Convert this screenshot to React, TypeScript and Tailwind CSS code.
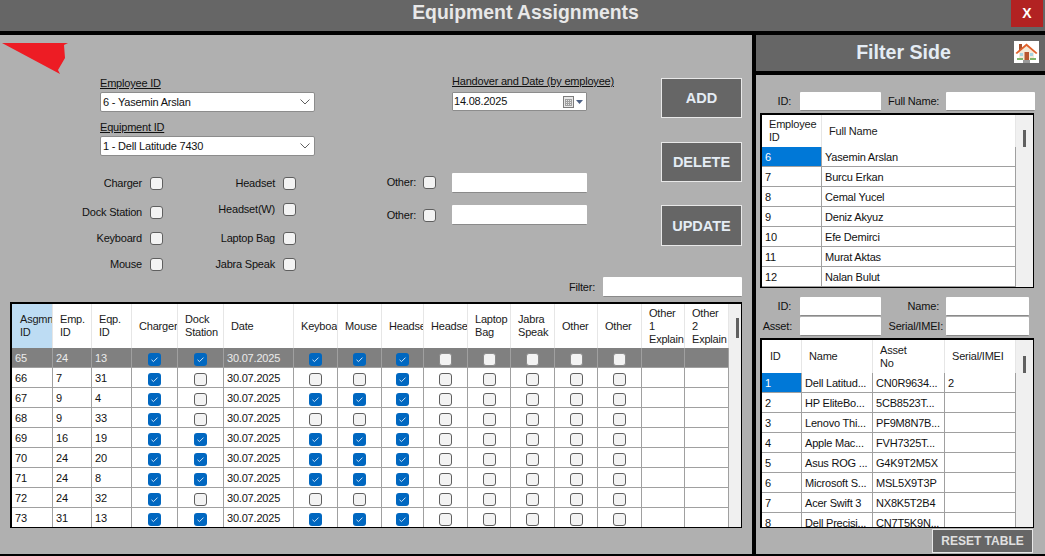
import React from "react";

const font = "font-['Liberation_Sans',Arial,sans-serif]";

interface BoxProps {
    checked?: boolean
    onDark?: boolean
}

const Box = ({checked, onDark}: BoxProps) => {
    if (checked) {
        return <span className="inline-flex items-center justify-center w-[13px] h-[13px] rounded-[3px] bg-[#0067c0] align-middle">
            <svg width="9" height="9" viewBox="0 0 9 9" fill="none">
                <path d="M1.5 4.8 L3.5 6.6 L7.5 2.6" stroke="#cfe4f7" strokeWidth="1"/>
            </svg>
        </span>;
    }
    return <span className={"inline-block w-[13px] h-[13px] rounded-[3px] border bg-[#f3f3f3] align-middle " + (onDark ? "border-[#8a8a8a]" : "border-[#5f5f5f]")}></span>;
}

const Field = ({className = ""}: { className?: string }) => (
    <div className={"bg-white rounded-[1px] border-b border-[#8a8a8a] " + className}></div>
);

const CheckLabel = ({label, gap, className}: { label: string, gap: string, className: string }) => (
    <div className={"flex justify-end items-center h-[14px] " + gap + " " + className}>
        <span className="whitespace-nowrap">{label}</span>
        <Box/>
    </div>
);

const Combo = ({value}: { value: string }) => (
    <div className="flex items-center justify-between w-[215px] h-[20px] bg-white border border-[#8c8c8c] rounded-[2px] pl-[2px] pr-[3px]">
        <span>{value}</span>
        <svg width="12" height="8" viewBox="0 0 12 8" fill="none">
            <path d="M1.5 1.5 L6 6 L10.5 1.5" stroke="#606060" strokeWidth="1"/>
        </svg>
    </div>
);

const ActionButton = ({label, className}: { label: string, className: string }) => (
    <div className={"flex items-center justify-center w-[81px] pt-[2px] bg-[#666666] border border-[#e8e8e8] text-[#e4ecf4] font-bold text-[14.5px] tracking-normal " + className}>{label}</div>
);

const Scrollbar = ({thumb}: { thumb: string }) => (
    <div className="w-[17px] shrink-0 bg-[#f0f0f0] flex justify-center">
        <div className={"w-[3px] bg-[#606060] " + thumb}></div>
    </div>
);

const widths = [41, 39, 40, 46, 46, 70, 44, 44, 42, 44, 43, 44, 43, 44, 43, 44];
const heads: React.ReactNode[] = ["Asgmnt ID", "Emp. ID", "Eqp. ID", "Charger", "Dock Station", "Date", "Keyboard", "Mouse", "Headset", "Headset(W)", "Laptop Bag", "Jabra Speak", "Other", "Other",
    <Fragment key="o1">Other<br/>1<br/>Explain</Fragment>,
    <Fragment key="o2">Other<br/>2<br/>Explain</Fragment>];

// id, emp, eqp, charger, dock, keyboard, mouse, headset
const rows: [number, number, number, number, number, number, number, number][] = [
    [65, 24, 13, 1, 1, 1, 1, 1],
    [66, 7, 31, 1, 0, 0, 0, 1],
    [67, 9, 4, 1, 0, 1, 1, 1],
    [68, 9, 33, 1, 0, 0, 0, 1],
    [69, 16, 19, 1, 1, 1, 1, 1],
    [70, 24, 20, 1, 1, 1, 1, 1],
    [71, 24, 8, 1, 1, 1, 1, 1],
    [72, 24, 32, 1, 0, 0, 0, 1],
    [73, 31, 13, 1, 1, 1, 1, 1],
];

const cell = "border-r border-b border-[#a0a0a0] h-[20px] p-0 pt-[2px] overflow-hidden whitespace-nowrap";
const headCell = "border-r border-[#e6e6e6] border-b-0 p-0 pl-[7px] overflow-hidden text-left font-normal align-middle leading-[13px] text-[#1a1a1a]";

const AssignmentTable = () => (
    <div className="flex mx-[10px] h-[226px] border-l-2 border-t-2 border-r border-b border-black bg-white overflow-hidden">
        <table className="table-fixed border-separate border-spacing-0 w-[717px] h-fit shrink-0">
            <colgroup>
                {widths.map((w, i) => <col key={i} style={{width: w}}/>)}
            </colgroup>
            <thead>
            <tr className="h-[44px]">
                {heads.map((h, i) => <th key={i} className={headCell + (i === 0 ? " bg-[#bddcf3] pl-[8px]" : "")}>{h}</th>)}
            </tr>
            </thead>
            <tbody>
            {rows.map((r, i) => {
                const sel = i === 0;
                const tone = sel ? " bg-[#808080] text-[#ececec]" : "";
                const text = cell + " pl-[3px]" + tone;
                const mid = cell + " text-center" + tone;
                return <tr key={r[0]}>
                    <td className={text}>{r[0]}</td>
                    <td className={text}>{r[1]}</td>
                    <td className={text}>{r[2]}</td>
                    <td className={mid}><Box checked={!!r[3]}/></td>
                    <td className={mid}><Box checked={!!r[4]}/></td>
                    <td className={text}>30.07.2025</td>
                    <td className={mid}><Box checked={!!r[5]}/></td>
                    <td className={mid}><Box checked={!!r[6]}/></td>
                    <td className={mid}><Box checked={!!r[7]}/></td>
                    <td className={mid}><Box onDark={sel}/></td>
                    <td className={mid}><Box onDark={sel}/></td>
                    <td className={mid}><Box onDark={sel}/></td>
                    <td className={mid}><Box onDark={sel}/></td>
                    <td className={mid}><Box onDark={sel}/></td>
                    <td className={text}></td>
                    <td className={text}></td>
                </tr>;
            })}
            </tbody>
        </table>
        <Scrollbar thumb="h-[20px] mt-[14px]"/>
    </div>
);

const employees: [string, string][] = [["6", "Yasemin Arslan"], ["7", "Burcu Erkan"], ["8", "Cemal Yucel"], ["9", "Deniz Akyuz"], ["10", "Efe Demirci"], ["11", "Murat Aktas"], ["12", "Nalan Bulut"]];

const EmployeeTable = () => (
    <div className="flex ml-[4px] w-[274px] h-[175px] border-l-2 border-t-2 border-r border-b border-black bg-white overflow-hidden">
        <table className="table-fixed border-separate border-spacing-0 w-[254px] h-fit shrink-0">
            <colgroup>
                <col style={{width: 60}}/>
                <col style={{width: 194}}/>
            </colgroup>
            <thead>
            <tr className="h-[32px]">
                <th className={headCell}>Employee ID</th>
                <th className={headCell}>Full Name</th>
            </tr>
            </thead>
            <tbody>
            {employees.map((e, i) => <tr key={e[0]}>
                <td className={cell + " pl-[3px]" + (i === 0 ? " bg-[#0078d7] text-white" : "")}>{e[0]}</td>
                <td className={cell + " pl-[3px]"}>{e[1]}</td>
            </tr>)}
            </tbody>
        </table>
        <Scrollbar thumb="h-[17px] mt-[15px]"/>
    </div>
);

const assets: [string, string, string, string][] = [
    ["1", "Dell Latitud...", "CN0R9634...", "2"],
    ["2", "HP EliteBo...", "5CB8523T...", ""],
    ["3", "Lenovo Thi...", "PF9M8N7B...", ""],
    ["4", "Apple Mac...", "FVH7325T...", ""],
    ["5", "Asus ROG ...", "G4K9T2M5X", ""],
    ["6", "Microsoft S...", "MSL5X9T3P", ""],
    ["7", "Acer Swift 3", "NX8K5T2B4", ""],
    ["8", "Dell Precisi...", "CN7T5K9N...", ""],
];

const AssetTable = () => (
    <div className="flex ml-[4px] w-[274px] h-[190px] border-l-2 border-t-2 border-r border-b border-black bg-white overflow-hidden">
        <table className="table-fixed border-separate border-spacing-0 w-[254px] h-fit shrink-0">
            <colgroup>
                <col style={{width: 40}}/>
                <col style={{width: 71}}/>
                <col style={{width: 72}}/>
                <col style={{width: 71}}/>
            </colgroup>
            <thead>
            <tr className="h-[33px]">
                <th className={headCell + " pl-[8px]"}>ID</th>
                <th className={headCell + " pl-[6px]"}>Name</th>
                <th className={headCell}>Asset<br/>No</th>
                <th className={headCell}>Serial/IMEI</th>
            </tr>
            </thead>
            <tbody>
            {assets.map((a, i) => <tr key={a[0]}>
                <td className={cell + " pl-[3px]" + (i === 0 ? " bg-[#0078d7] text-white" : "")}>{a[0]}</td>
                <td className={cell + " pl-[3px]"}>{a[1]}</td>
                <td className={cell + " pl-[3px]"}>{a[2]}</td>
                <td className={cell + " pl-[3px]"}>{a[3]}</td>
            </tr>)}
            </tbody>
        </table>
        <Scrollbar thumb="h-[17px] mt-[16px]"/>
    </div>
);

const HomeIcon = () => (
    <svg width="25" height="22" viewBox="0 0 25 22" className="bg-white">
        <rect x="5" y="3" width="3" height="6" fill="#a8502c"/>
        <path d="M5 11 L12.5 4 L20 11 V19 H5 Z" fill="#f4ead8"/>
        <path d="M1.5 12 L12.5 2.5 L23.5 12 L22 13 L12.5 5 L3 13 Z" fill="#e0602a"/>
        <rect x="10.5" y="11" width="4.5" height="8" fill="#b8562e"/>
        <rect x="6" y="12" width="3" height="3" fill="#a8d4e0"/>
        <rect x="16" y="12" width="3" height="3" fill="#a8d4e0"/>
        <rect x="3" y="17" width="6" height="2" fill="#7fb56a"/>
        <rect x="16" y="17" width="6" height="2" fill="#7fb56a"/>
        <rect x="9" y="19" width="7" height="3" fill="#9a9a9a"/>
    </svg>
);

const App = () => {
    return <div className={"w-[1045px] h-[556px] flex flex-col bg-black overflow-hidden text-[11px] tracking-[-0.2px] text-[#111111] " + font}>
        <div className="relative flex items-center justify-center h-[31px] bg-[#666666] shrink-0">
            <span className="text-[19.4px] tracking-normal font-bold text-[#e8e8e8] -mt-[6px] ml-[6px]">Equipment Assignments</span>
            <div className="absolute right-[2px] top-0 w-[32px] h-[27px] bg-[#b22222] flex items-center justify-center text-white font-bold text-[14px] tracking-normal">X</div>
        </div>
        <div className="flex mt-[4px] h-[519px]">
            <div className="relative w-[752px] shrink-0 bg-[#b0b0b0] flex flex-col">
                <svg width="70" height="34" viewBox="0 0 70 34" className="absolute left-0 top-[7px]">
                    <path d="M2 1 L68 1 L64 3 L65 16 L58 28 L60 32 Z" fill="#ed1c24"/>
                </svg>
                <div className="flex h-[267px]">
                    <div className="w-[330px] pl-[100px] shrink-0">
                        <div className="mt-[41px] h-[14px] leading-[14px] underline">Employee ID</div>
                        <div className="mt-[2px]"><Combo value="6 - Yasemin Arslan"/></div>
                        <div className="mt-[8px] h-[14px] leading-[14px] underline">Equipment ID</div>
                        <div className="mt-[2px]"><Combo value="1 - Dell Latitude 7430"/></div>
                        <div className="flex -ml-[100px] mt-[20px]">
                            <div className="w-[163px]">
                                <CheckLabel label="Charger" gap="gap-[8px]" className=""/>
                                <CheckLabel label="Dock Station" gap="gap-[8px]" className="mt-[15px]"/>
                                <CheckLabel label="Keyboard" gap="gap-[8px]" className="mt-[12px]"/>
                                <CheckLabel label="Mouse" gap="gap-[8px]" className="mt-[12px]"/>
                            </div>
                            <div className="w-[133px]">
                                <CheckLabel label="Headset" gap="gap-[8px]" className=""/>
                                <CheckLabel label="Headset(W)" gap="gap-[8px]" className="mt-[12px]"/>
                                <CheckLabel label="Laptop Bag" gap="gap-[8px]" className="mt-[15px]"/>
                                <CheckLabel label="Jabra Speak" gap="gap-[8px]" className="mt-[12px]"/>
                            </div>
                        </div>
                    </div>
                    <div className="w-[257px] shrink-0 flex flex-col">
                        <div className="ml-[122px] mt-[39px] h-[14px] leading-[14px] underline whitespace-nowrap">Handover and Date (by employee)</div>
                        <div className="ml-[122px] mt-[4px] w-[135px] h-[19px] flex items-center justify-between bg-white border border-[#8c8c8c] rounded-[1px] pl-[1px] pr-[3px]">
                            <span>14.08.2025</span>
                            <span className="flex items-center gap-[2px]">
                                <svg width="11" height="12" viewBox="0 0 11 12">
                                    <rect x="0.5" y="0.5" width="10" height="11" fill="#e8e8e8" stroke="#7c7c7c"/>
                                    <path d="M2.5 3 V10 M4.5 3 V10 M6.5 3 V10 M8.5 3 V10 M2 3.5 H9 M2 5.5 H9 M2 7.5 H9 M2 9.5 H9" stroke="#a0a0a0" strokeWidth="1"/>
                                </svg>
                                <svg width="7" height="4" viewBox="0 0 7 4"><path d="M0 0 H7 L3.5 4 Z" fill="#4d6185"/></svg>
                            </span>
                        </div>
                        <div className="flex items-center mt-[62px] h-[20px]">
                            <div className="w-[106px] flex justify-end items-center gap-[7px] -mt-[2px]">
                                <span>Other:</span><Box/>
                            </div>
                            <Field className="ml-[16px] w-[135px] h-[20px]"/>
                        </div>
                        <div className="flex items-center mt-[12px] h-[20px]">
                            <div className="w-[106px] flex justify-end items-center gap-[7px]">
                                <span>Other:</span><Box/>
                            </div>
                            <Field className="ml-[16px] w-[135px] h-[20px]"/>
                        </div>
                    </div>
                    <div className="flex flex-col items-end w-[165px] pr-[10px] shrink-0">
                        <ActionButton label="ADD" className="mt-[43px] h-[40px]"/>
                        <ActionButton label="DELETE" className="mt-[24px] h-[40px]"/>
                        <ActionButton label="UPDATE" className="mt-[23px] h-[41px]"/>
                        <div className="flex items-center gap-[8px] mt-[31px]">
                            <span className="whitespace-nowrap">Filter:</span>
                            <Field className="w-[139px] h-[20px]"/>
                        </div>
                    </div>
                </div>
                <AssignmentTable/>
            </div>
            <div className="ml-[4px] flex-1 flex flex-col">
                <div className="flex items-center h-[36px] bg-[#666666] relative shrink-0">
                    <span className="flex-1 text-center text-[19.6px] tracking-normal font-bold text-[#e4ecf4] pl-[6px]">Filter Side</span>
                    <div className="absolute right-[6px] top-[6px]"><HomeIcon/></div>
                </div>
                <div className="mt-[4px] flex-1 bg-[#b0b0b0] flex flex-col">
                    <div className="flex items-center h-[20px] mt-[16px]">
                        <span className="w-[35px] text-right">ID:</span>
                        <Field className="ml-[9px] w-[81px] h-[19px]"/>
                        <span className="ml-[7px] w-[50px] whitespace-nowrap">Full Name:</span>
                        <Field className="ml-[8px] w-[89px] h-[19px]"/>
                    </div>
                    <div className="mt-[2px]"><EmployeeTable/></div>
                    <div className="flex items-center h-[20px] mt-[8px]">
                        <span className="w-[35px] text-right">ID:</span>
                        <Field className="ml-[9px] w-[81px] h-[19px]"/>
                        <span className="ml-[6px] w-[52px] text-right">Name:</span>
                        <Field className="ml-[7px] w-[83px] h-[19px]"/>
                    </div>
                    <div className="flex items-center h-[20px]">
                        <span className="w-[36px] text-right">Asset:</span>
                        <Field className="ml-[8px] w-[81px] h-[19px]"/>
                        <span className="ml-[6px] w-[56px] text-right whitespace-nowrap">Serial/IMEI:</span>
                        <Field className="ml-[3px] w-[83px] h-[19px]"/>
                    </div>
                    <div className="mt-[2px]"><AssetTable/></div>
                    <div className="flex justify-end pr-[12px] mt-[1px]">
                        <div className="flex items-center justify-center w-[101px] h-[24px] bg-[#666666] border border-[#e8e8e8] text-[#e0e0e0] font-bold text-[12px] tracking-normal">RESET TABLE</div>
                    </div>
                </div>
            </div>
        </div>
    </div>;
}
export default App;

function Fragment({children}: { children: React.ReactNode }) {
    return <>{children}</>;
}
